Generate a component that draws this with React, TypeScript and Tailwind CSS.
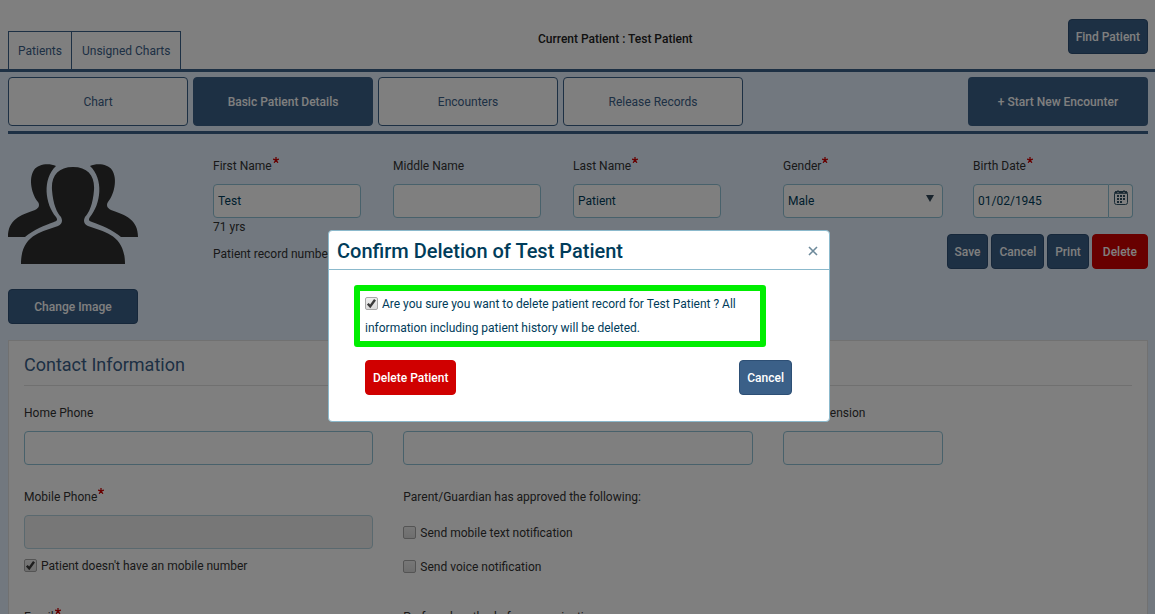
import clsx from 'clsx';
import * as React from 'react';

const tabs = [
    { name: 'Chart', current: false },
    { name: 'Basic Patient Details', current: true },
    { name: 'Encounters', current: false },
    { name: 'Release Records', current: false },
];

const inputClass = 'block h-[34px] rounded border border-[#91c3d6] bg-white px-1 text-[#003c5a] outline-none';

interface ButtonProps extends React.ButtonHTMLAttributes<HTMLButtonElement> {
    danger?: boolean;
}

const Button: React.FC<ButtonProps> = ({ danger, className, ...props }) => (
    <button
        type="button"
        className={clsx(
            'h-[35px] rounded border font-medium whitespace-nowrap text-white',
            danger ? 'border-[#d00000] bg-[#d00000]' : 'border-[#2d4f75] bg-[#3b6088]',
            className ?? 'px-[7px]'
        )}
        {...props}
    />
);

interface FieldProps {
    id: string;
    label: string;
    required?: boolean;
    children: React.ReactNode;
}

const Field: React.FC<FieldProps> = ({ id, label, required, children }) => (
    <div>
        <label htmlFor={id} className="mb-1.5 flex h-6 items-center">
            {label}
            {required && <Required />}
        </label>
        {children}
    </div>
);

const Required = () => (
    <svg viewBox="0 0 6 6" className="mb-3 ml-px size-[6px]" fill="none" stroke="#d00000" strokeWidth="1.3" aria-label="required">
        <path d="M3 0v3M0 2.2l3 .8M6 2.2L3 3M1.1 5.8L3 3M4.9 5.8L3 3" />
    </svg>
);

const CheckBox: React.FC<{ id: string; checked?: boolean }> = ({ id, checked }) => (
    <span className="mr-1 inline-grid size-[13px] align-[-2px]">
        <input
            id={id}
            type="checkbox"
            defaultChecked={checked}
            className="peer col-start-1 row-start-1 size-[13px] appearance-none rounded-[2px] border border-[#a8a8a8] bg-linear-to-b from-[#efefef] to-[#dcdcdc]"
        />
        <svg
            viewBox="0 0 13 13"
            className="pointer-events-none invisible col-start-1 row-start-1 size-[13px] peer-checked:visible"
            fill="none"
            stroke="#3c3c3c"
            strokeWidth="2.4"
        >
            <path d="M2.8 6.8l2.4 2.6 4.8-6.6" />
        </svg>
    </span>
);

const PeopleIcon = () => (
    <svg viewBox="0 0 130 101" className="h-[101px] w-[130px]" fill="#2e2e2e" aria-hidden="true">
        <path d="M48 3C41 0 30 1 26 7C20 16 24 32 30 39C32 42 31 45 27 47C12 52 0 57 0 74H17C25 67 37 62 46 59C49 58 50 57 48 54C37 41 34 16 48 3Z" />
        <path d="M82 3C89 0 100 1 104 7C110 16 106 32 100 39C98 42 99 45 103 47C118 52 130 57 130 74H113C105 67 93 62 84 59C81 58 80 57 82 54C93 41 96 16 82 3Z" />
        <path d="M65 4C50 4 43 13 44 27C45 41 49 50 53 54C55 58 54 61 50 63C33 69 13 72 13 101H117C117 72 97 69 80 63C76 61 75 58 77 54C81 50 85 41 86 27C87 13 80 4 65 4Z" />
    </svg>
);

const CalendarIcon = () => (
    <svg viewBox="0 0 14 15" className="h-[15px] w-[14px]" fill="none" aria-hidden="true">
        <rect x="0.5" y="1.5" width="13" height="13" rx="2" stroke="#33566b" />
        <path d="M1 2.5h12" stroke="#2f4f63" strokeWidth="2.6" />
        <path d="M4 0v2M10 0v2" stroke="#2f4f63" />
        <path d="M4 2v1M10 2v1" stroke="#fff" />
        <path d="M3 6h8M3 9h8M3 12h5" stroke="#2f4f63" strokeWidth="2" strokeDasharray="2 1" />
    </svg>
);

const Header = () => (
    <header className="grid h-[72px] grid-cols-[530px_1fr_auto] border-b-[3px] border-[#3b6088] bg-white pr-[7px] pl-2">
        <nav className="flex items-end text-[#3b6088]">
            <a href="#" className="flex h-[38px] items-center border border-b-0 border-[#3b6088] px-[9px]">
                Patients
            </a>
            <a href="#" className="flex h-[38px] items-center border border-b-0 border-l-0 border-[#3b6088] px-[10px]">
                Unsigned Charts
            </a>
        </nav>
        <p className="pt-[29px] font-medium text-[#222]">Current Patient : Test Patient</p>
        <div className="flex justify-end pt-[19px]">
            <Button>Find Patient</Button>
        </div>
    </header>
);

const Toolbar = () => (
    <div className="flex justify-between border-b-[3px] border-[#3b6088] py-[5px]">
        <nav className="flex gap-[5px]">
            {tabs.map((tab) => (
                <a
                    key={tab.name}
                    href="#"
                    className={clsx(
                        'flex h-[49px] w-[180px] items-center justify-center rounded border border-[#3b6088]',
                        tab.current ? 'bg-[#3b6088] font-medium text-white' : 'bg-white text-[#3b6088]'
                    )}
                >
                    {tab.name}
                </a>
            ))}
        </nav>
        <button type="button" className="h-[49px] w-[180px] rounded bg-[#3b6088] font-medium text-white">
            + Start New Encounter
        </button>
    </div>
);

const PatientDetails = () => (
    <section className="flex pt-5">
        <div className="w-[205px] shrink-0 pt-[9px]">
            <PeopleIcon />
            <Button className="mt-[25px] w-[130px]">Change Image</Button>
        </div>
        <div className="flex-1">
            <div className="grid grid-cols-[180px_180px_210px_190px_1fr]">
                <Field id="first-name" label="First Name" required>
                    <input id="first-name" defaultValue="Test" className={clsx(inputClass, 'w-[148px]')} />
                </Field>
                <Field id="middle-name" label="Middle Name">
                    <input id="middle-name" className={clsx(inputClass, 'w-[148px]')} />
                </Field>
                <Field id="last-name" label="Last Name" required>
                    <input id="last-name" defaultValue="Patient" className={clsx(inputClass, 'w-[148px]')} />
                </Field>
                <Field id="gender" label="Gender" required>
                    <div className="grid w-[160px]">
                        <select id="gender" className={clsx(inputClass, 'col-start-1 row-start-1 w-full appearance-none')}>
                            <option>Male</option>
                            <option>Female</option>
                        </select>
                        <svg
                            viewBox="0 0 8 7"
                            className="pointer-events-none col-start-1 row-start-1 mt-[11px] mr-[9px] h-[7px] w-2 justify-self-end"
                            fill="#33495a"
                        >
                            <path d="M0 0h8L4 7z" />
                        </svg>
                    </div>
                </Field>
                <Field id="birth-date" label="Birth Date" required>
                    <div className="flex w-[160px]">
                        <input id="birth-date" defaultValue="01/02/1945" className={clsx(inputClass, 'w-[136px] rounded-r-none')} />
                        <button
                            type="button"
                            aria-label="Pick a date"
                            className="flex h-[34px] w-6 justify-center rounded-r border border-l-0 border-[#91c3d6] bg-white pt-[5px]"
                        >
                            <CalendarIcon />
                        </button>
                    </div>
                </Field>
            </div>
            <div className="flex justify-between">
                <div>
                    <p className="leading-[18px]">71 yrs</p>
                    <p className="mt-2">Patient record number</p>
                </div>
                <div className="flex gap-[3px] pt-4">
                    <Button>Save</Button>
                    <Button>Cancel</Button>
                    <Button>Print</Button>
                    <Button danger className="px-[10px]">
                        Delete
                    </Button>
                </div>
            </div>
        </div>
    </section>
);

const ContactInformation = () => (
    <section className="mt-4 border border-[#e3e3e3] bg-white px-[15px] pb-8">
        <h2 className="border-b border-[#e0e0e0] pt-3 pb-2 text-lg leading-6 text-[#3b6088]">Contact Information</h2>
        <div className="mt-[15px] grid grid-cols-3 gap-x-[30px]">
            <Field id="home-phone" label="Home Phone">
                <input id="home-phone" className={clsx(inputClass, 'w-full')} />
            </Field>
            <Field id="work-phone" label="Work Phone">
                <input id="work-phone" className={clsx(inputClass, 'w-full')} />
            </Field>
            <Field id="extension" label="Work Extension">
                <input id="extension" className={clsx(inputClass, 'w-[160px]')} />
            </Field>
        </div>
        <div className="mt-5 grid grid-cols-3 gap-x-[30px]">
            <div>
                <Field id="mobile-phone" label="Mobile Phone" required>
                    <input
                        id="mobile-phone"
                        disabled
                        className="block h-[34px] w-full rounded border border-[#b5d3de] bg-[#eee] px-1"
                    />
                </Field>
                <label htmlFor="no-mobile" className="mt-[7px] block">
                    <CheckBox id="no-mobile" checked />
                    Patient doesn't have an mobile number
                </label>
            </div>
            <div>
                <p className="leading-6">Parent/Guardian has approved the following:</p>
                <label htmlFor="notify-text" className="mt-[14px] block">
                    <CheckBox id="notify-text" />
                    Send mobile text notification
                </label>
                <label htmlFor="notify-voice" className="mt-[14px] block">
                    <CheckBox id="notify-voice" />
                    Send voice notification
                </label>
            </div>
        </div>
        <div className="mt-7 grid grid-cols-3 gap-x-[30px]">
            <Field id="email" label="Email" required>
                <input id="email" type="email" className={clsx(inputClass, 'w-full')} />
            </Field>
            <Field id="method" label="Preferred method of communication:">
                <select id="method" className={clsx(inputClass, 'w-full')}>
                    <option>Email</option>
                    <option>Phone</option>
                </select>
            </Field>
        </div>
    </section>
);

const ConfirmDialog = () => (
    <div className="fixed inset-0 flex items-start justify-center bg-black/50 pt-[230px] pl-[3px]">
        <div
            role="dialog"
            aria-modal="true"
            aria-labelledby="confirm-title"
            className="w-[502px] rounded border border-[#8bb9cc] bg-white text-[#003c5a]"
        >
            <div className="flex h-[39px] items-center justify-between border-b border-[#8bb9cc] pt-0.5 pr-[11px] pl-2">
                <h1 id="confirm-title" className="text-xl font-medium">
                    Confirm Deletion of Test Patient
                </h1>
                <button type="button" aria-label="Close">
                    <svg viewBox="0 0 10 10" className="size-[10px]" stroke="#6d8a9b" strokeWidth="1.6">
                        <path d="M1 1l8 8M9 1L1 9" />
                    </svg>
                </button>
            </div>
            <div className="px-[25px] pt-[15px] pb-[26px]">
                <div className="w-[412px] rounded-[3px] border-6 border-[#00ee00] px-[5px] py-px leading-6">
                    <label htmlFor="confirm-delete" className="block">
                        <CheckBox id="confirm-delete" checked />
                        Are you sure you want to delete patient record for Test Patient ? All information including patient
                        history will be deleted.
                    </label>
                </div>
                <div className="flex justify-between pt-[13px] pr-3 pl-[11px]">
                    <Button danger>Delete Patient</Button>
                    <Button>Cancel</Button>
                </div>
            </div>
        </div>
    </div>
);

export default function App() {
    return (
        <div className="h-screen overflow-hidden bg-[#e4f1ff] font-['Roboto',sans-serif] text-xs leading-5 text-[#333]">
            <Header />
            <main className="pr-[7px] pl-2">
                <Toolbar />
                <PatientDetails />
                <ContactInformation />
            </main>
            <ConfirmDialog />
        </div>
    );
}
